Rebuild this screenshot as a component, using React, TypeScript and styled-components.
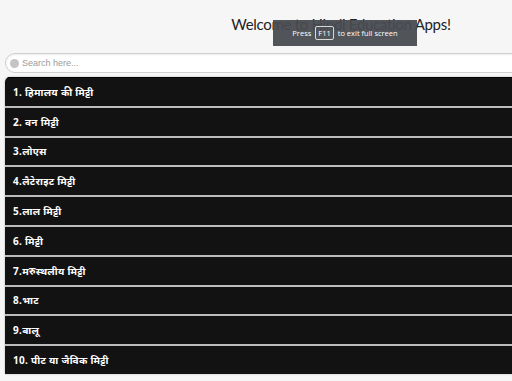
import React from "react";
import styled, { createGlobalStyle } from "styled-components";

const Global = createGlobalStyle`
  html, body { margin: 0; padding: 0; background: #f6f6f6; overflow: hidden; }
  body { width: 512px; height: 381px; }
`;

const Page = styled.div`
  position: relative;
  width: 680px;
  height: 381px;
  font-family: "Liberation Sans", Arial, sans-serif;
`;

const Header = styled.header`
  height: 53px;
  display: flex;
  align-items: flex-start;
  justify-content: center;
  padding-top: 15px;
  padding-left: 2px;
  box-sizing: border-box;
`;

const Title = styled.h1`
  margin: 0;
  font-family: Lato, sans-serif;
  font-weight: 400;
  font-size: 15px;
  letter-spacing: -0.3px;
  color: #222;
`;

const Toast = styled.div`
  position: absolute;
  left: 273px;
  top: 20px;
  width: 144px;
  height: 26px;
  background: rgba(72, 75, 80, 0.95);
  display: flex;
  align-items: center;
  justify-content: center;
  gap: 4px;
  color: #fff;
  font-family: "Open Sans", sans-serif;
  font-size: 7.5px;
`;

const Key = styled.span`
  border: 1px solid #d8d8d8;
  border-radius: 2px;
  padding: 1px 2px;
  font-size: 7.5px;
`;

const SearchBar = styled.div`
  margin-left: 5px;
  height: 20px;
  box-sizing: border-box;
  border: 1px solid #cfcfcf;
  border-radius: 10px;
  background: #fff;
  display: flex;
  align-items: center;
  padding-left: 4px;
  gap: 3px;
  box-shadow: inset 0 1px 2px rgba(0,0,0,0.08);
`;

const SearchDot = styled.span`
  width: 9px;
  height: 9px;
  border-radius: 50%;
  background: #c4c4c4;
`;

const Placeholder = styled.span`
  font-size: 9px;
  color: #9a9a9a;
  font-family: "Liberation Sans", Arial, sans-serif;
`;

const List = styled.ul`
  list-style: none;
  margin: 4px 0 0 5px;
  padding: 0;
  border-radius: 5px 0 0 0;
  overflow: hidden;
  box-shadow: 0 0 2px rgba(0,0,0,0.3);
`;

const Row = styled.li<{ $first?: boolean }>`
  height: 27.8px;
  background: #121212;
  border-top: ${(p) => (p.$first ? "1px solid #000" : "2px solid #bcbcbc")};
  display: flex;
  align-items: center;
  padding-left: 8px;
  color: #fff;
  font-weight: bold;
  font-size: 10px;
  letter-spacing: 0.3px;
  font-family: "Noto Sans", "Liberation Sans", sans-serif;
`;

const items = [
  "1. हिमालय की मिट्टी",
  "2. वन मिट्टी",
  "3.लोएस",
  "4.लैटेराइट मिट्टी",
  "5.लाल मिट्टी",
  "6. मिट्टी",
  "7.मरुस्थलीय मिट्टी",
  "8.भाट",
  "9.बालू",
  "10. पीट या जैविक मिट्टी",
];

export default function App() {
  return (
    <Page>
      <Global />
      <Header>
        <Title>Welcome to Hindi Education Apps!</Title>
      </Header>
      <Toast>
        <span>Press</span>
        <Key>F11</Key>
        <span>to exit full screen</span>
      </Toast>
      <SearchBar>
        <SearchDot />
        <Placeholder>Search here...</Placeholder>
      </SearchBar>
      <List>
        {items.map((t, i) => (
          <Row key={i} $first={i === 0}>
            {t}
          </Row>
        ))}
      </List>
    </Page>
  );
}
